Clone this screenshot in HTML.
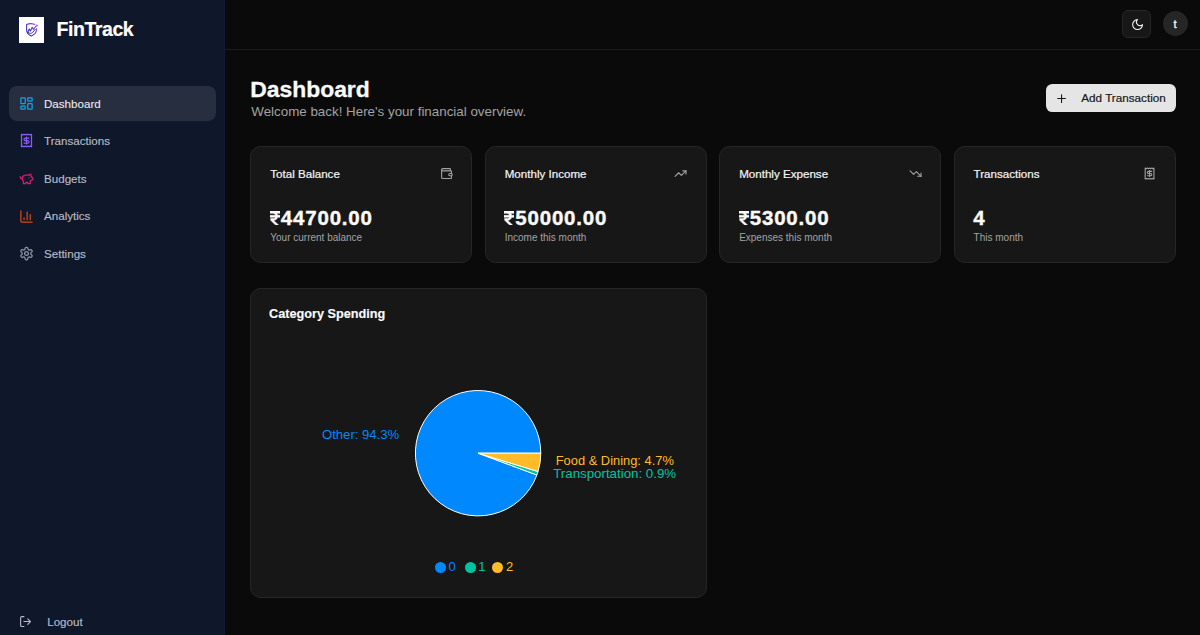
<!DOCTYPE html>
<html>
<head>
<meta charset="utf-8">
<style>
html,body{margin:0;padding:0;}
body{width:1200px;height:635px;overflow:hidden;background:#0a0a0a;position:relative;font-family:"Liberation Sans",sans-serif;}
.t{position:absolute;line-height:1;white-space:nowrap;}
.ic{position:absolute;fill:none;stroke-linecap:round;stroke-linejoin:round;}
#side{position:absolute;left:0;top:0;width:225px;height:635px;background:#0f172a;box-shadow:inset -1px 0 0 #101a30;}
.nav{color:#b6bbc7;font-size:11.6px;left:44px;-webkit-text-stroke:0.15px #b6bbc7;}
.card{position:absolute;top:146.1px;height:117px;width:222.1px;box-sizing:border-box;border:1px solid #262626;background:#171717;border-radius:10.5px;}
.ctitle{font-size:11.6px;color:#f5f5f5;top:20.6px;left:19px;-webkit-text-stroke:0.2px #f5f5f5;}
.cval{font-size:20.5px;font-weight:700;color:#fafafa;top:61.0px;left:18.6px;letter-spacing:0.8px;-webkit-text-stroke:0.4px #fafafa;}
.csub{font-size:10px;color:#a3a3a3;top:86.2px;left:19px;}
.cic{position:absolute;top:20px;right:18.5px;width:13.125px;height:13.125px;stroke:#a3a3a3;stroke-width:2;fill:none;stroke-linecap:round;stroke-linejoin:round;}
</style>
</head>
<body>
<div id="side">
  <!-- logo -->
  <div style="position:absolute;left:19px;top:17px;width:25px;height:26px;background:#fff;"></div>
  <svg class="ic" style="left:22px;top:19px;" width="20" height="20" viewBox="0 0 20 20">
    <defs><linearGradient id="lg" x1="0" y1="1" x2="1" y2="0"><stop offset="0" stop-color="#2a2aa8"/><stop offset="0.6" stop-color="#5b3fd6"/><stop offset="1" stop-color="#b44ee8"/></linearGradient></defs>
    <path d="M12.8 5.4 C10.5 4.5 7 4.5 4.6 5.6 V10.5 C4.6 13.8 6.8 15.9 9.4 16.9 C12 15.9 14.5 13.8 14.5 10.6 V9.8" stroke="url(#lg)" stroke-width="1.1"/>
    <path d="M5.8 13.2 L7.3 10 L8.4 12 L10.2 8.3 L11.3 10.3 L14.6 6.6" stroke="url(#lg)" stroke-width="1.1"/>
    <path d="M6.3 13.6 C7.6 14.8 9.6 14.6 10.8 13.2 L13.2 10.4" stroke="#3b2fc0" stroke-width="1"/>
    <circle cx="14.8" cy="6.4" r="1" fill="#b44ee8"/>
  </svg>
  <div class="t" style="left:56.6px;top:19.5px;font-size:19.5px;font-weight:700;color:#fff;letter-spacing:-0.45px;-webkit-text-stroke:0.2px #fff;">FinTrack</div>

  <!-- active nav bg -->
  <div style="position:absolute;left:9.1px;top:86px;width:206.6px;height:35px;border-radius:8px;background:rgba(255,255,255,0.1);"></div>

  <svg class="ic" style="left:19px;top:96px;stroke:#0ea5e9;" width="15" height="15" viewBox="0 0 24 24" stroke-width="2"><rect width="7" height="9" x="3" y="3" rx="1"/><rect width="7" height="5" x="14" y="3" rx="1"/><rect width="7" height="9" x="14" y="12" rx="1"/><rect width="7" height="5" x="3" y="16" rx="1"/></svg>
  <div class="t nav" style="top:97.9px;color:#f1f5f9;">Dashboard</div>

  <svg class="ic" style="left:19px;top:133.3px;stroke:#8b5cf6;" width="15" height="15" viewBox="0 0 24 24" stroke-width="2"><path d="M4 2v20l2-1 2 1 2-1 2 1 2-1 2 1 2-1 2 1V2l-2 1-2-1-2 1-2-1-2 1-2-1-2 1Z"/><path d="M16 8h-6a2 2 0 1 0 0 4h4a2 2 0 1 1 0 4H8"/><path d="M12 17.5v-11"/></svg>
  <div class="t nav" style="top:135.4px;">Transactions</div>

  <svg class="ic" style="left:19px;top:170.8px;stroke:#d61a6c;" width="15" height="15" viewBox="0 0 24 24" stroke-width="2"><path d="M19 5c-1.5 0-2.8 1.4-3 2-3.5-1.5-11-.3-11 5 0 1.8 0 3 2 4.5V20h4v-2h3v2h4v-4c1-.5 1.7-1 2-2h2v-4h-2c0-1-.5-1.5-1-2V5z"/><path d="M2 9v1c0 1.1.9 2 2 2h1"/><path d="M16 11h.01"/></svg>
  <div class="t nav" style="top:172.9px;">Budgets</div>

  <svg class="ic" style="left:19px;top:209px;stroke:#d9480f;" width="15" height="15" viewBox="0 0 24 24" stroke-width="2"><path d="M3 3v16a2 2 0 0 0 2 2h16"/><path d="M18 17V9"/><path d="M13 17V5"/><path d="M8 17v-3"/></svg>
  <div class="t nav" style="top:210.4px;">Analytics</div>

  <svg class="ic" style="left:19px;top:245.8px;stroke:#8f96a6;" width="15" height="15" viewBox="0 0 24 24" stroke-width="2"><path d="M12.22 2h-.44a2 2 0 0 0-2 2v.18a2 2 0 0 1-1 1.73l-.43.25a2 2 0 0 1-2 0l-.15-.08a2 2 0 0 0-2.73.73l-.22.38a2 2 0 0 0 .73 2.730l.15.1a2 2 0 0 1 1 1.72v.51a2 2 0 0 1-1 1.74l-.15.09a2 2 0 0 0-.73 2.73l.22.38a2 2 0 0 0 2.73.73l.15-.08a2 2 0 0 1 2 0l.43.25a2 2 0 0 1 1 1.73V20a2 2 0 0 0 2 2h.44a2 2 0 0 0 2-2v-.18a2 2 0 0 1 1-1.73l.43-.25a2 2 0 0 1 2 0l.15.08a2 2 0 0 0 2.73-.73l.22-.39a2 2 0 0 0-.73-2.73l-.15-.08a2 2 0 0 1-1-1.74v-.5a2 2 0 0 1 1-1.74l.15-.09a2 2 0 0 0 .73-2.73l-.22-.38a2 2 0 0 0-2.73-.73l-.15.08a2 2 0 0 1-2 0l-.43-.25a2 2 0 0 1-1-1.73V4a2 2 0 0 0-2-2z"/><circle cx="12" cy="12" r="3"/></svg>
  <div class="t nav" style="top:247.9px;">Settings</div>

  <svg class="ic" style="left:18.5px;top:615.2px;stroke:#b6bbc7;" width="13.125" height="13.125" viewBox="0 0 24 24" stroke-width="2"><path d="M9 21H5a2 2 0 0 1-2-2V5a2 2 0 0 1 2-2h4"/><path d="m16 17 5-5-5-5"/><path d="M21 12H9"/></svg>
  <div class="t nav" style="left:47.2px;top:615.8px;">Logout</div>
</div>

<!-- header -->
<div style="position:absolute;left:225px;top:49px;width:975px;height:1px;background:#1c1c1c;"></div>
<div style="position:absolute;left:1122.2px;top:10.1px;width:28.6px;height:27.7px;box-sizing:border-box;border:1px solid #262626;border-radius:6px;background:#171717;"></div>
<svg class="ic" style="left:1130.6px;top:17.5px;stroke:#f5f5f5;" width="13.125" height="13.125" viewBox="0 0 24 24" stroke-width="2"><path d="M12 3a6 6 0 0 0 9 9 9 9 0 1 1-9-9Z"/></svg>
<div style="position:absolute;left:1163px;top:11px;width:25px;height:25px;border-radius:50%;background:#262626;"></div>
<div class="t" style="left:1173.5px;top:18.8px;font-size:11.4px;color:#fafafa;-webkit-text-stroke:0.3px #fafafa;">t</div>

<!-- title -->
<div class="t" style="left:250.2px;top:78.1px;font-size:22.9px;font-weight:700;color:#fafafa;-webkit-text-stroke:0.3px #fafafa;">Dashboard</div>
<div class="t" style="left:251.3px;top:104.8px;font-size:13.36px;color:#a3a3a3;">Welcome back! Here's your financial overview.</div>

<!-- add button -->
<div style="position:absolute;left:1046.1px;top:83.8px;width:129.6px;height:28px;border-radius:6.4px;background:#e5e5e5;"></div>
<svg class="ic" style="left:1055.2px;top:91.7px;stroke:#171717;" width="13.125" height="13.125" viewBox="0 0 24 24" stroke-width="2"><path d="M5 12h14"/><path d="M12 5v14"/></svg>
<div class="t" style="left:1081.3px;top:92px;font-size:11.7px;color:#171717;-webkit-text-stroke:0.2px #171717;">Add Transaction</div>

<!-- cards -->
<div class="card" style="left:250.25px;">
  <div class="t ctitle">Total Balance</div>
  <svg class="cic" viewBox="0 0 24 24"><path d="M19 7V4a1 1 0 0 0-1-1H5a2 2 0 0 0 0 4h15a1 1 0 0 1 1 1v4h-3a2 2 0 0 0 0 4h3a1 1 0 0 0 1-1v-2a1 1 0 0 0-1-1"/><path d="M3 5v14a2 2 0 0 0 2 2h15a1 1 0 0 0 1-1v-4"/></svg>
  <div class="t cval"><svg style="display:inline-block;vertical-align:0;margin-right:1px" width="10" height="14" viewBox="0 0 10 14"><path fill="#fafafa" stroke="#fafafa" stroke-width="0.5" d="M0 0H10V2.3H6.8C7.3 2.8 7.6 3.5 7.7 4.3H10V6.3H7.6C7.2 8.2 5.6 9.3 3.6 9.4L8.6 14H5.6L0.6 9.3V7.5H2.9C4.3 7.5 5.2 7.1 5.5 6.3H0V4.3H5.5C5.2 3.3 4.3 2.3 2.9 2.3H0Z"/></svg>44700.00</div>
  <div class="t csub">Your current balance</div>
</div>
<div class="card" style="left:484.7px;">
  <div class="t ctitle">Monthly Income</div>
  <svg class="cic" viewBox="0 0 24 24"><path d="M22 7 13.5 15.5 8.5 10.5 2 17"/><path d="M16 7h6v6"/></svg>
  <div class="t cval"><svg style="display:inline-block;vertical-align:0;margin-right:1px" width="10" height="14" viewBox="0 0 10 14"><path fill="#fafafa" stroke="#fafafa" stroke-width="0.5" d="M0 0H10V2.3H6.8C7.3 2.8 7.6 3.5 7.7 4.3H10V6.3H7.6C7.2 8.2 5.6 9.3 3.6 9.4L8.6 14H5.6L0.6 9.3V7.5H2.9C4.3 7.5 5.2 7.1 5.5 6.3H0V4.3H5.5C5.2 3.3 4.3 2.3 2.9 2.3H0Z"/></svg>50000.00</div>
  <div class="t csub">Income this month</div>
</div>
<div class="card" style="left:719.15px;">
  <div class="t ctitle">Monthly Expense</div>
  <svg class="cic" viewBox="0 0 24 24"><path d="M22 17 13.5 8.5 8.5 13.5 2 7"/><path d="M16 17h6v-6"/></svg>
  <div class="t cval"><svg style="display:inline-block;vertical-align:0;margin-right:1px" width="10" height="14" viewBox="0 0 10 14"><path fill="#fafafa" stroke="#fafafa" stroke-width="0.5" d="M0 0H10V2.3H6.8C7.3 2.8 7.6 3.5 7.7 4.3H10V6.3H7.6C7.2 8.2 5.6 9.3 3.6 9.4L8.6 14H5.6L0.6 9.3V7.5H2.9C4.3 7.5 5.2 7.1 5.5 6.3H0V4.3H5.5C5.2 3.3 4.3 2.3 2.9 2.3H0Z"/></svg>5300.00</div>
  <div class="t csub">Expenses this month</div>
</div>
<div class="card" style="left:953.6px;">
  <div class="t ctitle">Transactions</div>
  <svg class="cic" viewBox="0 0 24 24"><path d="M4 2v20l2-1 2 1 2-1 2 1 2-1 2 1 2-1 2 1V2l-2 1-2-1-2 1-2-1-2 1-2-1-2 1Z"/><path d="M16 8h-6a2 2 0 1 0 0 4h4a2 2 0 1 1 0 4H8"/><path d="M12 17.5v-11"/></svg>
  <div class="t cval">4</div>
  <div class="t csub">This month</div>
</div>

<!-- category spending -->
<div style="position:absolute;left:250.25px;top:287.75px;width:456.5px;height:310.7px;box-sizing:border-box;border:1px solid #262626;background:#171717;border-radius:10.5px;"></div>
<div class="t" style="left:269px;top:307.5px;font-size:12.7px;font-weight:700;color:#fafafa;-webkit-text-stroke:0.15px #fafafa;">Category Spending</div>

<svg style="position:absolute;left:0;top:0;" width="1200" height="635" viewBox="0 0 1200 635">
  <path d="M478.1 453.2 L540.8 453.2 A62.7 62.7 0 1 0 536.88 475.03 Z" fill="#0088FE" stroke="#fff" stroke-width="1"/>
  <path d="M478.1 453.2 L536.88 475.03 A62.7 62.7 0 0 0 538.07 471.51 Z" fill="#00C49F" stroke="#fff" stroke-width="1"/>
  <path d="M478.1 453.2 L538.07 471.51 A62.7 62.7 0 0 0 540.8 453.2 Z" fill="#FFBB28" stroke="#fff" stroke-width="1"/>
</svg>
<div class="t" style="left:322px;top:428.2px;font-size:13.1px;color:#0088FE;">Other: 94.3%</div>
<div class="t" style="left:555.7px;top:454.7px;font-size:12.9px;color:#FFBB28;">Food &amp; Dining: 4.7%</div>
<div class="t" style="left:553.2px;top:467.2px;font-size:13.3px;color:#00C49F;">Transportation: 0.9%</div>

<!-- legend -->
<div style="position:absolute;left:435px;top:562.1px;width:11px;height:11px;border-radius:50%;background:#0088FE;"></div>
<div class="t" style="left:448.6px;top:560.2px;font-size:13px;color:#0088FE;">0</div>
<div style="position:absolute;left:464.6px;top:562.1px;width:11px;height:11px;border-radius:50%;background:#00C49F;"></div>
<div class="t" style="left:478.2px;top:560.2px;font-size:13px;color:#00C49F;">1</div>
<div style="position:absolute;left:492.1px;top:562.1px;width:11px;height:11px;border-radius:50%;background:#FFBB28;"></div>
<div class="t" style="left:506px;top:560.2px;font-size:13px;color:#FFBB28;">2</div>
</body>
</html>
